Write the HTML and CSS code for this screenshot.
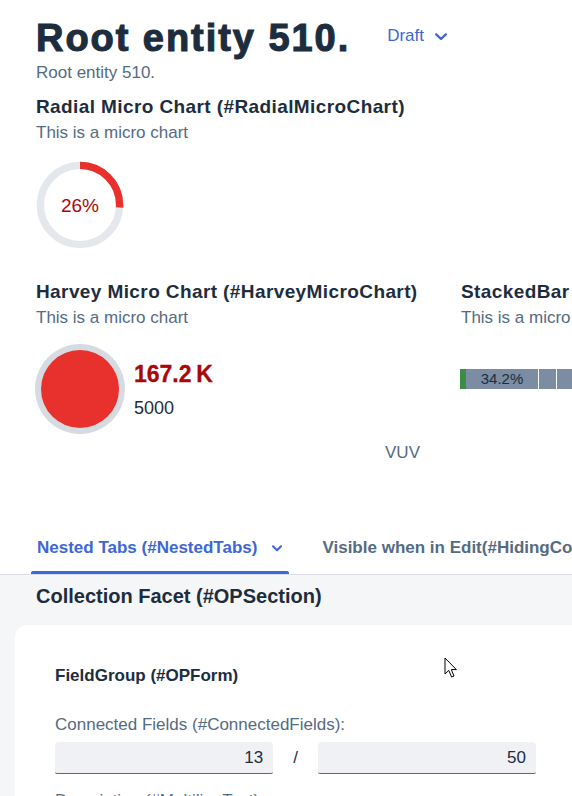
FILE: index.html
```html
<!DOCTYPE html>
<html lang="en">
<head>
<meta charset="utf-8">
<title>Root entity 510.</title>
<link rel="stylesheet" href="styles.css">
</head>
<body>
<div class="page">
  <header class="obj-header">
    <div class="title-row">
      <h1 class="title">Root entity 510.</h1>
      <span class="draft">Draft
        <svg class="chev" width="12" height="8" viewBox="0 0 12 8"><path d="M1.2 1.4 L6 6 L10.8 1.4" fill="none" stroke="currentColor" stroke-width="2.3" stroke-linecap="round" stroke-linejoin="round"/></svg>
      </span>
    </div>
    <div class="subtitle">Root entity 510.</div>

    <section class="chart-block">
      <h2 class="chart-title">Radial Micro Chart (#RadialMicroChart)</h2>
      <div class="chart-desc">This is a micro chart</div>
      <svg class="radial" width="88" height="88" viewBox="0 0 88 88">
        <circle cx="44" cy="44" r="39.6" fill="none" stroke="#e4e7eb" stroke-width="7.4"/>
        <circle cx="44" cy="44" r="39.6" fill="none" stroke="#e9302c" stroke-width="7.4" stroke-dasharray="64.69 400" transform="rotate(-90 44 44)"/>
        <text x="44" y="50.7" text-anchor="middle" class="radial-label">26%</text>
      </svg>
    </section>

    <div class="chart-row">
      <section class="chart-block col">
        <h2 class="chart-title">Harvey Micro Chart (#HarveyMicroChart)</h2>
        <div class="chart-desc">This is a micro chart</div>
        <div class="harvey">
          <svg class="harvey-pie" width="90" height="90" viewBox="0 0 90 90">
            <circle cx="45" cy="45" r="45" fill="#d6dbe2"/>
            <circle cx="45" cy="45" r="39" fill="#e8302d"/>
          </svg>
          <div class="harvey-values">
            <div class="harvey-value">167.2&#8239;K</div>
            <div class="harvey-total">5000</div>
          </div>
        </div>
        <div class="unit">VUV</div>
      </section>
      <section class="chart-block col">
        <h2 class="chart-title">StackedBar Micro Chart (#StackedBarMicroChart)</h2>
        <div class="chart-desc">This is a micro chart</div>
        <div class="stacked">
          <div class="seg seg-green"></div>
          <div class="seg seg-main">34.2%</div>
          <div class="seg seg-b"></div>
          <div class="seg seg-c"></div>
        </div>
      </section>
    </div>
  </header>

  <nav class="tabbar">
    <div class="tab active">
      <div class="tab-label">Nested Tabs (#NestedTabs)
        <svg class="tab-chev" width="10" height="7" viewBox="0 0 10 7"><path d="M1 1.2 L5 5.2 L9 1.2" fill="none" stroke="currentColor" stroke-width="2" stroke-linecap="round" stroke-linejoin="round"/></svg>
      </div>
      <div class="tab-bar"></div>
    </div>
    <div class="tab">
      <div class="tab-label">Visible when in Edit(#HidingContent)</div>
      <div class="tab-bar"></div>
    </div>
  </nav>

  <main class="content">
    <h3 class="section-title">Collection Facet (#OPSection)</h3>
    <div class="card">
      <div class="form">
        <h4 class="group-title">FieldGroup (#OPForm)</h4>
        <div class="field-label">Connected Fields (#ConnectedFields):</div>
        <div class="field-row">
          <div class="input">13</div>
          <span class="sep">/</span>
          <div class="input">50</div>
        </div>
        <div class="field-label next">Description (#MultilineText):</div>
      </div>
    </div>
  </main>

  <svg class="cursor" width="14" height="22" viewBox="0 0 14 22"><path d="M1 1 L1 17 L4.8 13.4 L7.6 20 L10 19 L7.3 12.6 L12.4 12.6 Z" fill="#fff" stroke="#000" stroke-width="1" stroke-linejoin="round"/></svg>
</div>
</body>
</html>
```

FILE: styles.css
```css
html, body {
  margin: 0;
  padding: 0;
  overflow: hidden;
  background: #ffffff;
}

.page {
  position: relative;
  width: 572px;
  min-height: 796px;
  overflow: hidden;
  font-family: "Liberation Sans", Arial, sans-serif;
  color: #1d2d3e;
}

.obj-header {
  padding: 16px 0 0 36px;
  background: #ffffff;
}

.title-row {
  display: flex;
  align-items: flex-start;
  gap: 37px;
}

.title {
  margin: 0;
  font-size: 38px;
  line-height: 44px;
  font-weight: 700;
  letter-spacing: 1.95px;
  color: #1d2d3e;
  -webkit-text-stroke: 1.1px #1d2d3e;
  white-space: nowrap;
}

.draft {
  margin-top: 10px;
  display: inline-flex;
  align-items: center;
  gap: 11px;
  font-size: 17px;
  line-height: 20px;
  color: #3d67d8;
}

.chev {
  display: block;
  margin-top: 2px;
}

.subtitle {
  margin-top: 3px;
  font-size: 17px;
  line-height: 20px;
  color: #556b82;
}

.chart-block {
  margin-top: 13px;
}

.chart-title {
  margin: 0;
  font-size: 19px;
  line-height: 22px;
  font-weight: 700;
  letter-spacing: 0.4px;
  color: #1d2d3e;
  white-space: nowrap;
}

.chart-desc {
  margin-top: 5px;
  font-size: 17px;
  line-height: 20px;
  color: #556b82;
  white-space: nowrap;
}

.radial {
  display: block;
  margin-top: 18px;
}

.radial-label {
  font-family: "Liberation Sans", Arial, sans-serif;
  font-size: 19px;
  fill: #aa0808;
}

.chart-row {
  display: flex;
  gap: 41px;
  margin-top: 32px;
}

.chart-row .chart-block {
  margin-top: 0;
}

.col {
  flex: none;
  width: 384px;
}

.harvey {
  display: flex;
  align-items: flex-start;
  gap: 9px;
  margin-top: 16px;
}

.harvey-pie {
  display: block;
  margin-left: -1px;
}

.harvey-values {
  margin-top: 17px;
}

.harvey-value {
  font-size: 23px;
  line-height: 26px;
  font-weight: 700;
  color: #aa0808;
  -webkit-text-stroke: 0.3px #aa0808;
}

.harvey-total {
  margin-top: 10px;
  font-size: 18px;
  line-height: 22px;
  color: #1d2d3e;
}

.unit {
  margin-top: 9px;
  text-align: right;
  font-size: 17px;
  line-height: 20px;
  color: #556b82;
}

.stacked {
  display: flex;
  margin-top: 41px;
  margin-left: -1px;
  height: 20px;
  background: #ffffff;
}

.seg {
  height: 20px;
  flex: none;
}

.seg-green {
  width: 6px;
  background: #3a8c47;
}

.seg-main {
  width: 72px;
  background: #7b8ca3;
  text-align: center;
  font-size: 15px;
  line-height: 20px;
  color: #1d2d3e;
}

.seg-b {
  width: 17px;
  margin-left: 1px;
  background: #7b8ca3;
}

.seg-c {
  width: 120px;
  margin-left: 1px;
  background: #7b8ca3;
}

.tabbar {
  display: flex;
  gap: 27px;
  margin-top: 75px;
  padding-left: 31px;
  border-bottom: 1px solid #d9dde3;
  background: #ffffff;
  white-space: nowrap;
  box-shadow: 0 1px 2px rgba(0, 0, 0, 0.04);
}

.tab {
  flex: none;
  display: flex;
  flex-direction: column;
}

.tab-label {
  display: flex;
  align-items: center;
  gap: 15px;
  padding: 0 7px 0 6px;
  font-size: 17px;
  line-height: 20px;
  font-weight: 700;
  color: #556b82;
}

.tab.active .tab-label {
  color: #3d67d8;
}

.tab-chev {
  display: block;
}

.tab-bar {
  margin-top: 13px;
  height: 3px;
  border-radius: 2px 2px 0 0;
}

.tab.active .tab-bar {
  background: #3d67d8;
}

.content {
  background: #f5f6f7;
  padding: 9px 0 0 15px;
  min-height: 240px;
}

.section-title {
  margin: 0;
  padding-left: 21px;
  font-size: 20px;
  line-height: 24px;
  font-weight: 700;
  color: #1d2d3e;
}

.card {
  margin-top: 17px;
  width: 561px;
  padding: 41px 40px 40px;
  background: #ffffff;
  border-radius: 12px;
}

.form {
  width: 481px;
}

.group-title {
  margin: 0;
  font-size: 17px;
  line-height: 20px;
  font-weight: 700;
  color: #1d2d3e;
}

.field-label {
  margin-top: 29px;
  font-size: 17px;
  line-height: 20px;
  color: #556b82;
}

.field-label.next {
  margin-top: 17px;
}

.field-row {
  display: flex;
  align-items: center;
  gap: 20px;
  margin-top: 7px;
}

.input {
  flex: 1;
  height: 31px;
  padding-right: 10px;
  background: #eff1f4;
  border-bottom: 1px solid #556b82;
  border-radius: 4px 4px 2px 2px;
  text-align: right;
  font-size: 17px;
  line-height: 32px;
  color: #1d2d3e;
}

.sep {
  font-size: 17px;
  line-height: 20px;
  color: #1d2d3e;
}

.cursor {
  position: absolute;
  left: 444px;
  top: 657px;
}
```
